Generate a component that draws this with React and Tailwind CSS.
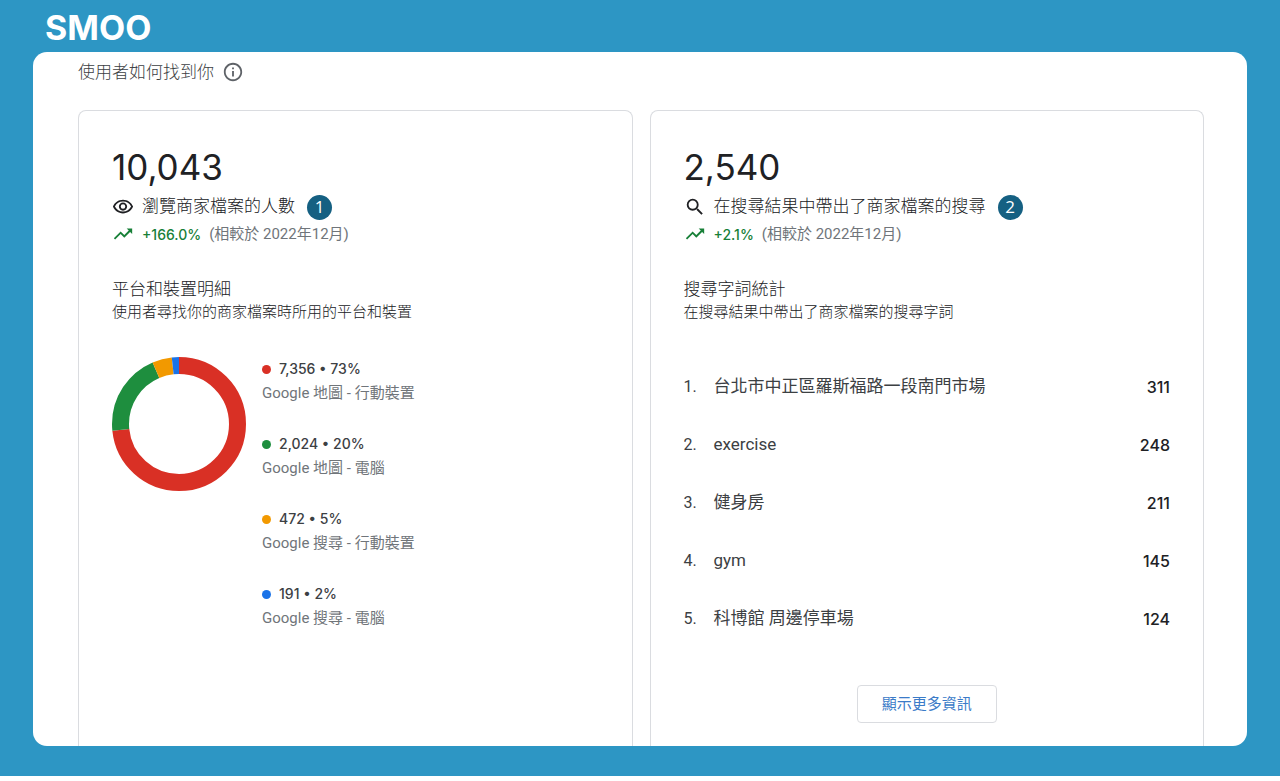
import React from "react";
import {
  MdInfoOutline,
  MdOutlineVisibility,
  MdSearch,
  MdTrendingUp,
} from "react-icons/md";

const platforms = [
  { label: "Google 地圖 - 行動裝置", value: 7356, percent: 73, color: "#d93025", dot: "bg-[#d93025]" },
  { label: "Google 地圖 - 電腦", value: 2024, percent: 20, color: "#1e8e3e", dot: "bg-[#1e8e3e]" },
  { label: "Google 搜尋 - 行動裝置", value: 472, percent: 5, color: "#f29900", dot: "bg-[#f29900]" },
  { label: "Google 搜尋 - 電腦", value: 191, percent: 2, color: "#1a73e8", dot: "bg-[#1a73e8]" },
];

const searchTerms = [
  { term: "台北市中正區羅斯福路一段南門市場", count: 311 },
  { term: "exercise", count: 248 },
  { term: "健身房", count: 211 },
  { term: "gym", count: 145 },
  { term: "科博館 周邊停車場", count: 124 },
];

const DonutChart = ({ data }) => {
  const radius = 58.5;
  const length = 2 * Math.PI * radius;
  const total = data.reduce((sum, item) => sum + item.value, 0);
  let start = 0;

  return (
    <svg className="size-[134px] shrink-0" viewBox="0 0 134 134" aria-hidden="true">
      <g transform="rotate(-90 67 67)" fill="none" strokeWidth="17">
        {data.map((item) => {
          const part = (item.value / total) * length;
          const offset = -start;
          start += part;
          return (
            <circle
              key={item.label}
              cx="67"
              cy="67"
              r={radius}
              stroke={item.color}
              strokeDasharray={`${part} ${length - part}`}
              strokeDashoffset={offset}
            />
          );
        })}
      </g>
    </svg>
  );
};

const Card = ({ total, icon: Icon, label, badge, change, title, subtitle, children }) => (
  <section className="min-w-0 flex-1 rounded-t-lg border border-b-0 border-[#dadce0] px-[33px] pt-8">
    <p className="font-[Inter,sans-serif] text-[35px] leading-12 text-[#202124]">{total}</p>
    <div className="flex h-8 items-center">
      <Icon className="mr-2 size-[22px] shrink-0 text-[#202124]" />
      <h2 className="text-[17px] font-light text-[#202124]">{label}</h2>
      <span className="ml-3 flex size-[25px] shrink-0 items-center justify-center rounded-full bg-[#156082] font-['Open_Sans',sans-serif] text-[17px] text-white">
        {badge}
      </span>
    </div>
    <div className="flex h-[22px] items-center text-[15px]">
      <MdTrendingUp className="mr-2 size-[22px] shrink-0 text-[#188038]" />
      <span className="mr-2 font-[Inter,sans-serif] text-[14px] font-medium text-[#188038]">
        {change}
      </span>
      <span className="text-[#70757a]">(相較於 2022年12月)</span>
    </div>
    <h3 className="mt-[33px] text-[17px] leading-[23px] font-light text-[#202124]">{title}</h3>
    <p className="text-[15px] leading-[23px] font-light text-[#202124]">{subtitle}</p>
    {children}
  </section>
);

const App = () => {
  return (
    <div className="bg-[#2d96c4] pb-[30px] font-[Roboto,'Noto_Sans_CJK_TC',sans-serif]">
      <header className="flex h-[52px] items-center px-[45px] pt-1">
        <span className="font-[Inter,sans-serif] text-[34px] leading-12 font-bold text-white">
          SMOO
        </span>
      </header>

      <main className="mx-[33px] overflow-hidden rounded-[14px] bg-white pr-[43px] pl-[45px]">
        <div className="flex h-[58px] items-start gap-2">
          <h1 className="text-[17px] leading-10 font-light text-[#3c4043]">使用者如何找到你</h1>
          <button type="button" aria-label="說明" className="flex h-10 items-center">
            <MdInfoOutline className="size-[22px] text-[#5f6368]" />
          </button>
        </div>

        <div className="flex gap-[17px]">
          <Card
            total="10,043"
            icon={MdOutlineVisibility}
            label="瀏覽商家檔案的人數"
            badge="1"
            change="+166.0%"
            title="平台和裝置明細"
            subtitle="使用者尋找你的商家檔案時所用的平台和裝置"
          >
            <div className="mt-[33px] flex gap-4">
              <DonutChart data={platforms} />
              <ul className="flex flex-col gap-[27px]">
                {platforms.map((item) => (
                  <li key={item.label} className="leading-6">
                    <div className="flex items-center gap-2 font-[Inter,'Noto_Sans_CJK_TC',sans-serif] text-[14px] font-medium text-[#3c4043]">
                      <span className={`size-[9px] rounded-full ${item.dot}`} />
                      <span>
                        {item.value.toLocaleString("en-US")} • {item.percent}%
                      </span>
                    </div>
                    <p className="text-[15px] text-[#70757a]">{item.label}</p>
                  </li>
                ))}
              </ul>
            </div>
          </Card>

          <Card
            total="2,540"
            icon={MdSearch}
            label="在搜尋結果中帶出了商家檔案的搜尋"
            badge="2"
            change="+2.1%"
            title="搜尋字詞統計"
            subtitle="在搜尋結果中帶出了商家檔案的搜尋字詞"
          >
            <ol className="mt-[34px]">
              {searchTerms.map((item, index) => (
                <li key={item.term} className="flex h-[58px] items-center text-[#3c4043]">
                  <span className="w-[30px] text-base">{index + 1}.</span>
                  <span className="flex-1 text-[17px]">{item.term}</span>
                  <span className="font-[Inter,sans-serif] text-base font-medium text-[#202124]">
                    {item.count}
                  </span>
                </li>
              ))}
            </ol>
            <div className="mt-[37px] flex justify-center pb-[23px]">
              <button
                type="button"
                className="h-[38px] rounded border border-[#dadce0] px-6 text-[15px] text-[#3b7bc8]"
              >
                顯示更多資訊
              </button>
            </div>
          </Card>
        </div>
      </main>
    </div>
  );
};

export default App;
